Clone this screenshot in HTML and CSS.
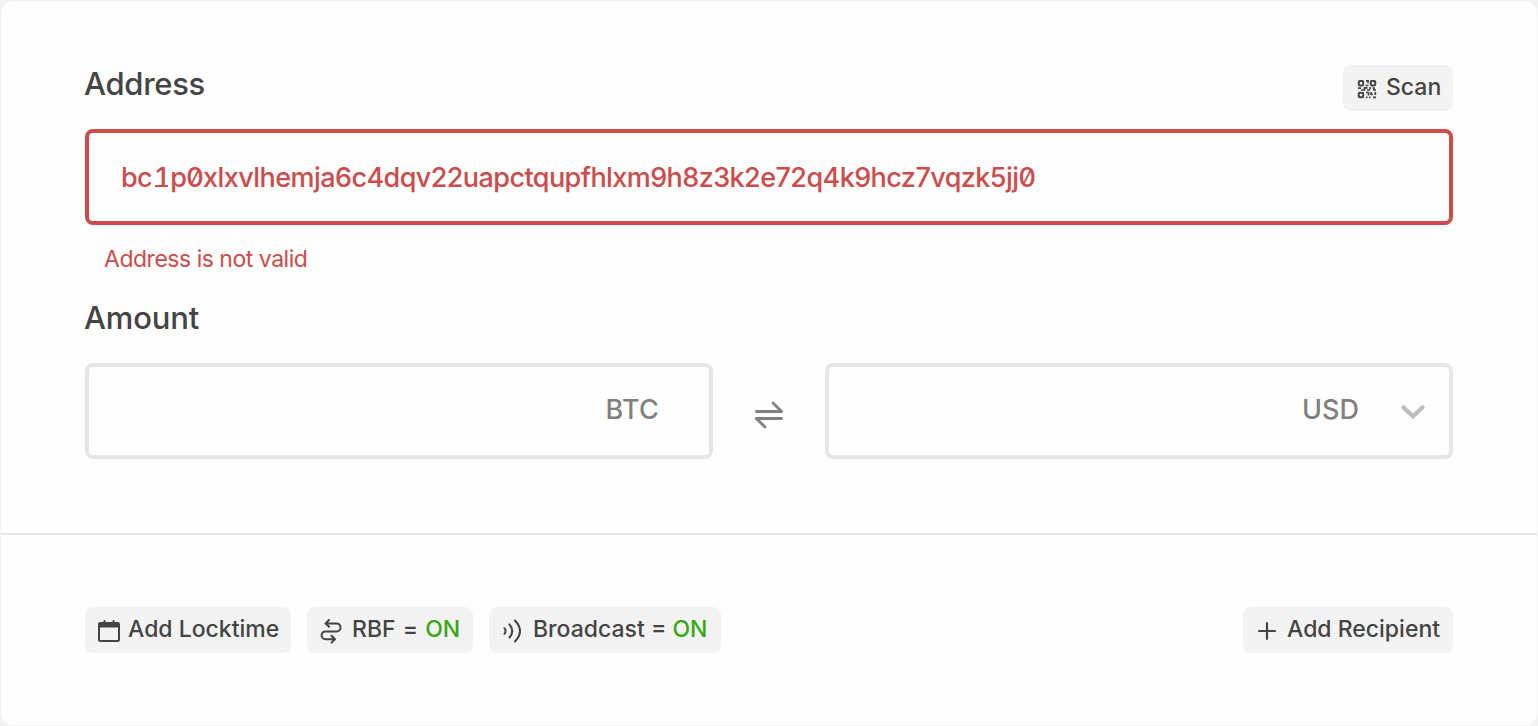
FILE: index.html
```html
<!DOCTYPE html>
<html lang="en">
<head>
<meta charset="utf-8">
<title>Send</title>
<link rel="stylesheet" href="styles.css">
</head>
<body>
<main class="card">
  <section class="recipient">
    <div class="head">
      <h2 class="label label-address">Address</h2>
      <button class="chip scan">
        <svg class="icon" width="20" height="20" viewBox="0 0 20 20" fill="none" stroke="currentColor" stroke-width="2">
          <rect x="1.800" y="2" width="4.400" height="4.400" rx=".8"/><rect x="13.800" y="2" width="4.400" height="4.400" rx=".8"/><rect x="1.800" y="13.800" width="4.400" height="4.400" rx=".8"/>
          <path stroke-width="1.700" d="M9 1.900h2v2.300M8.500 6.500h3M1 9.200h3M4 11h3.500V8.800h3M10 11h3M13 8v2.500M15.500 9h1.500v2h2M9 13.500h2.500v3M9 18.300h1.500M12 18.300h1.500M14 13v3M14 15.500h2M18.300 13v3M16 18.300h3"/>
        </svg>
        <span class="text">Scan</span>
      </button>
    </div>
    <div class="field invalid"><span class="address">bc<span class="one">1</span>p0xlxvlhemja6c4dqv22uapctqupfhlxm9h8z3k2e72q4k9hcz7vqzk5jj0</span></div>
    <p class="error">Address is not valid</p>
    <h2 class="label label-amount">Amount</h2>
    <div class="amounts">
      <div class="field amount btc"><span>BTC</span></div>
      <svg class="swap" width="32" height="32" viewBox="0 0 32 32" fill="none" stroke="#808080" stroke-width="2.800" stroke-linecap="round" stroke-linejoin="round">
        <path d="M3.400 12.500h25.200L20 4M28.600 19.500H3.400L12 28"/>
      </svg>
      <div class="field amount usd"><span>USD</span>
        <svg class="chevron" width="26" height="16" viewBox="0 0 26 16" fill="none" stroke="#bdbdbd" stroke-width="4.400" stroke-linecap="round"><path d="M3.500 3.500l9.500 8.800 9.500-8.800"/></svg>
      </div>
    </div>
  </section>
  <footer class="options">
    <button class="chip locktime">
      <svg class="icon" width="22" height="24" viewBox="0 0 22 24" fill="none" stroke="currentColor" stroke-width="2"><rect x="1" y="4" width="20" height="18" rx="1.500"/><path stroke-width="5" d="M1 6h20"/><path stroke-linecap="round" d="M6.500 2v3M15.500 2v3"/></svg>
      <span class="text">Add Locktime</span>
    </button>
    <button class="chip rbf">
      <svg class="icon" width="22" height="26" viewBox="0 0 22 26" fill="none" stroke="currentColor" stroke-width="2" stroke-linecap="round" stroke-linejoin="round"><path d="M9 2L5.500 5.400 9 8.800M5.500 5.400H16.500a4 4 0 0 1 0 8H5.500a3.900 3.900 0 0 0 0 7.800H14.500M11.500 17.800l3.500 3.400-3.500 3.400"/></svg>
      <span class="text">RBF <span class="eq">=</span> <b class="on">ON</b></span>
    </button>
    <button class="chip broadcast">
      <svg class="icon" width="20" height="26" viewBox="0 0 20 26" fill="none" stroke="currentColor" stroke-width="2" stroke-linecap="round"><path d="M1.500 10.200q2.200 2.800 0 5.600M6.500 6.500q5.500 6.500 0 13M12 2.500q10 10.500 0 21"/></svg>
      <span class="text">Broadcast <span class="eq">=</span> <b class="on">ON</b></span>
    </button>
    <button class="chip add">
      <svg class="icon" width="20" height="20" viewBox="0 0 20 20" fill="none" stroke="currentColor" stroke-width="2.200" stroke-linecap="round"><path d="M10 2v16M2 10h16"/></svg>
      <span class="text">Add Recipient</span>
    </button>
  </footer>
</main>
</body>
</html>
```
FILE: styles.css
```css
* { box-sizing: border-box; }
body { margin: 0; background: #f3f3f3; color: #444; font-family: Inter, sans-serif; }
.card { height: 726px; border: 1px solid #f3f3f3; border-radius: 13px; background: #fefefe; overflow: hidden; }
.recipient { height: 534px; padding: 64px 84px 0; border-bottom: 2px solid #e6e6e6; }
.head { display: flex; justify-content: space-between; height: 64px; }
.label { margin: 0 0 0 -1px; font-size: 31px; font-weight: 500; line-height: 40px; letter-spacing: -.3px; white-space: nowrap; }
.label-address { line-height: 38px; }
.field { display: flex; align-items: center; height: 96px; border: 4px solid #e6e6e6; border-radius: 8px; }
.invalid { padding: 2px 0 0 32px; border-color: #cc4b4b; color: #cc4b4b; }
.address { font-size: 27px; font-weight: 500; line-height: 40px; letter-spacing: -.57px; white-space: nowrap; font-feature-settings: "zero"; }
.one { display: inline-block; position: relative; width: 18px; text-align: center; }
/* foot serif of the digit */
.one::after { content: ""; position: absolute; left: 3px; bottom: 11px; width: 13px; height: 2.5px; background: currentColor; }
.error { height: 40px; margin: 14px 0 0 19px; color: #cc4b4b; font-size: 23px; line-height: 40px; letter-spacing: -.48px; }
.label-amount { margin-top: 19px; letter-spacing: -.15px; }
.amounts { display: flex; justify-content: space-between; align-items: center; margin-top: 25px; color: #808080; font-size: 27px; font-weight: 500; }
.amount { width: 628px; justify-content: flex-end; padding-bottom: 3px; }
.btc { padding-right: 50px; letter-spacing: .2px; }
.usd { padding-right: 23px; gap: 41px; }
.swap { margin-top: 8px; }
.chevron { margin-top: 5px; }
.options { display: flex; gap: 16px; height: 190px; padding: 72px 84px 0; }
.chip { display: flex; align-items: center; height: 46px; padding: 0; border: 0; border-radius: 8px; background: #f3f3f3; color: #444; font: 500 23px/40px Inter, sans-serif; white-space: nowrap; }
.text { position: relative; top: -1px; }
.icon { margin-top: 2px; flex: none; }
.scan { width: 110px; padding-left: 14px; gap: 9px; }
.locktime { width: 206px; padding-left: 13px; gap: 8px; }
.rbf { width: 166px; padding-left: 13px; gap: 10px; }
.rbf .eq { margin: 0 1px; }
.broadcast { width: 232px; padding-left: 14px; gap: 10px; }
.add { width: 210px; padding-left: 14px; gap: 10px; margin-left: auto; }
.on { color: #37a819; font-weight: 500; }
```
